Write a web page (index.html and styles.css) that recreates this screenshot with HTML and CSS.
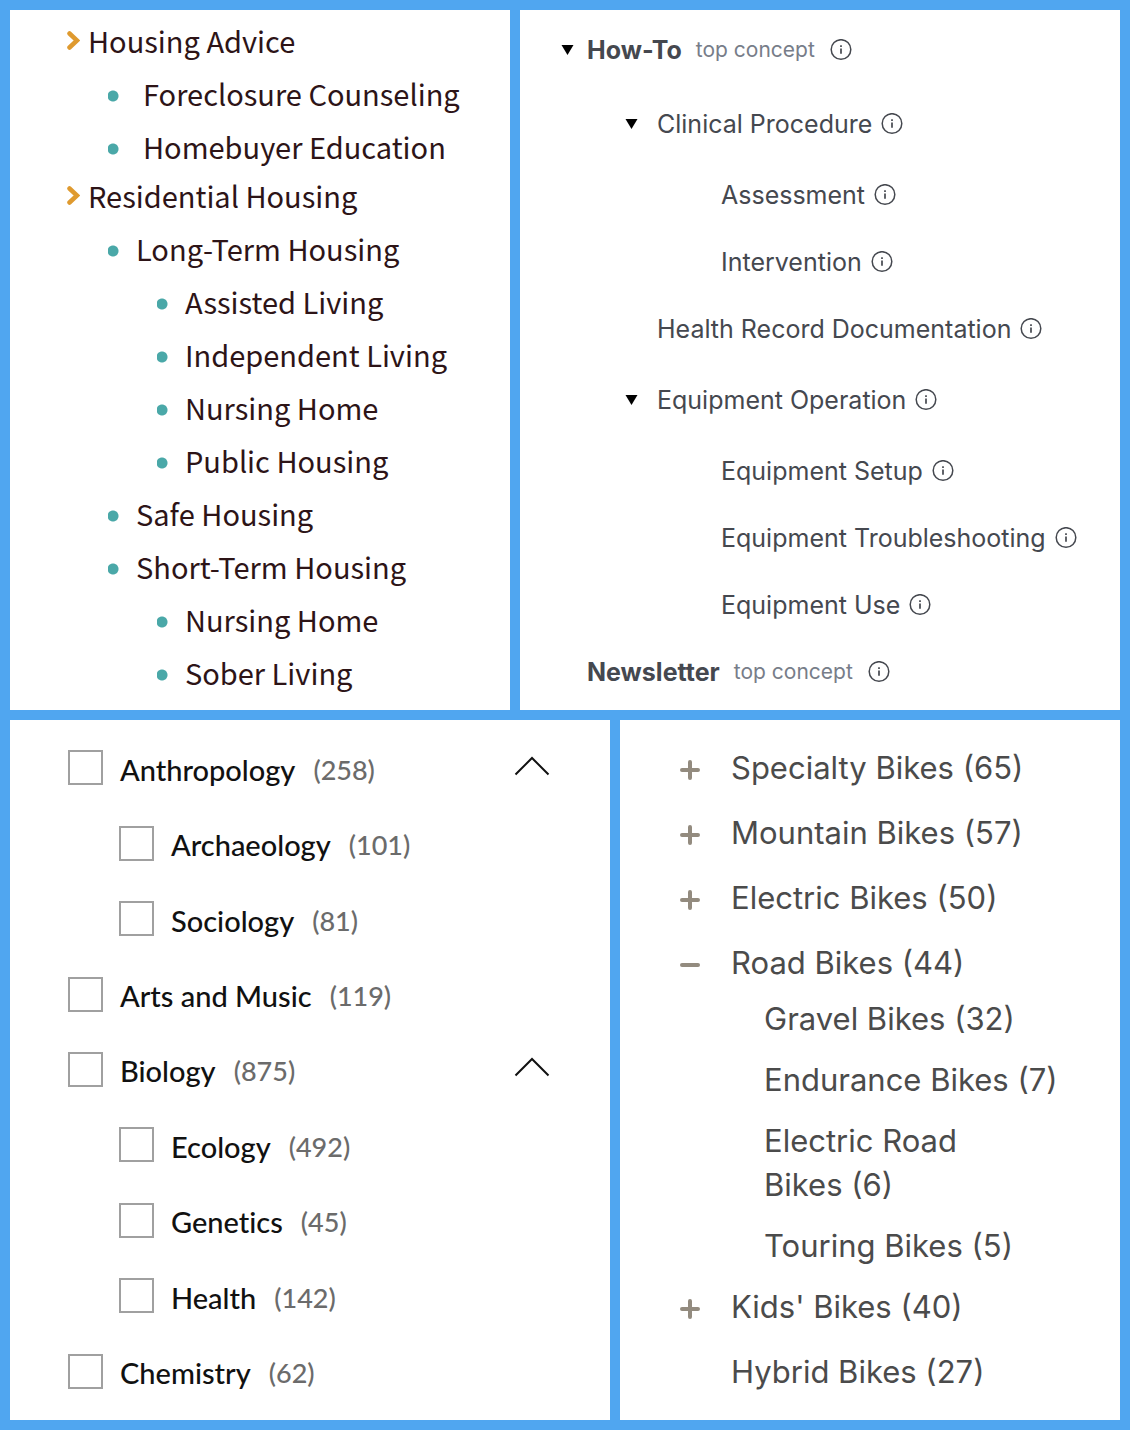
FILE: index.html
```html
<!DOCTYPE html>
<html lang="en">
<head>
<meta charset="utf-8">
<meta name="viewport" content="width=device-width, initial-scale=1">
<title>Hierarchy examples</title>
<link rel="stylesheet" href="styles.css">
</head>
<body>
<svg class="sprite" aria-hidden="true">
  <symbol id="angle" viewBox="0 0 14 20"><path d="M3.500 2.500 11 9.500 3.500 16.500" fill="none" stroke="#df9a2f" stroke-width="4.500" stroke-linecap="round"/></symbol>
  <symbol id="caret" viewBox="0 0 12 10"><path d="M0 0H12L6 10Z" fill="#000"/></symbol>
  <symbol id="info" viewBox="0 0 22 22"><circle cx="11" cy="10.500" r="9.800" fill="none" stroke="#45484f" stroke-width="1.500"/><path d="M11 9.500v5.200M11 6.200v1.800" fill="none" stroke="#45484f" stroke-width="1.700"/></symbol>
  <symbol id="chevron" viewBox="0 0 36 20"><path d="M1.500 18.500 18 2 34.500 18.500" fill="none" stroke="#111" stroke-width="2"/></symbol>
  <symbol id="plus" viewBox="0 0 20 20"><path d="M2 10H18M10 2V18" fill="none" stroke="#938b7f" stroke-width="4" stroke-linecap="round"/></symbol>
  <symbol id="minus" viewBox="0 0 20 20"><path d="M2 10H18" fill="none" stroke="#938b7f" stroke-width="4" stroke-linecap="round"/></symbol>
</svg>

<main class="board">
  <div class="row">
    <section class="panel housing">
      <ul>
        <li>
          <div class="topic"><svg class="angle"><use href="#angle"/></svg>Housing Advice</div>
          <ul class="bullets wide">
            <li>Foreclosure Counseling</li>
            <li>Homebuyer Education</li>
          </ul>
        </li>
        <li>
          <div class="topic"><svg class="angle"><use href="#angle"/></svg>Residential Housing</div>
          <ul class="bullets">
            <li>Long-Term Housing
              <ul class="bullets">
                <li>Assisted Living</li>
                <li>Independent Living</li>
                <li>Nursing Home</li>
                <li>Public Housing</li>
              </ul>
            </li>
            <li>Safe Housing</li>
            <li>Short-Term Housing
              <ul class="bullets">
                <li>Nursing Home</li>
                <li>Sober Living</li>
              </ul>
            </li>
          </ul>
        </li>
      </ul>
    </section>

    <section class="panel concepts">
      <ul>
        <li>
          <div class="concept root open">
            <button class="toggle" aria-label="Collapse How-To"><svg class="caret"><use href="#caret"/></svg></button>
            <strong>How-To</strong><span class="note">top concept</span>
            <button class="info" aria-label="About How-To"><svg><use href="#info"/></svg></button>
          </div>
          <ul class="second">
            <li>
              <div class="concept open">
                <button class="toggle" aria-label="Collapse Clinical Procedure"><svg class="caret"><use href="#caret"/></svg></button>
                <span>Clinical Procedure</span>
                <button class="info" aria-label="About Clinical Procedure"><svg><use href="#info"/></svg></button>
              </div>
              <ul class="third">
                <li class="concept"><span>Assessment</span><button class="info" aria-label="About Assessment"><svg><use href="#info"/></svg></button></li>
                <li class="concept"><span>Intervention</span><button class="info" aria-label="About Intervention"><svg><use href="#info"/></svg></button></li>
              </ul>
            </li>
            <li class="concept"><span>Health Record Documentation</span><button class="info" aria-label="About Health Record Documentation"><svg><use href="#info"/></svg></button></li>
            <li>
              <div class="concept open">
                <button class="toggle" aria-label="Collapse Equipment Operation"><svg class="caret"><use href="#caret"/></svg></button>
                <span>Equipment Operation</span>
                <button class="info" aria-label="About Equipment Operation"><svg><use href="#info"/></svg></button>
              </div>
              <ul class="third">
                <li class="concept"><span>Equipment Setup</span><button class="info" aria-label="About Equipment Setup"><svg><use href="#info"/></svg></button></li>
                <li class="concept"><span>Equipment Troubleshooting</span><button class="info" aria-label="About Equipment Troubleshooting"><svg><use href="#info"/></svg></button></li>
                <li class="concept"><span>Equipment Use</span><button class="info" aria-label="About Equipment Use"><svg><use href="#info"/></svg></button></li>
              </ul>
            </li>
          </ul>
        </li>
        <li class="concept root">
          <strong>Newsletter</strong><span class="note">top concept</span>
          <button class="info" aria-label="About Newsletter"><svg><use href="#info"/></svg></button>
        </li>
      </ul>
    </section>
  </div>

  <div class="row flipped">
    <section class="panel subjects">
      <ul>
        <li><label><input type="checkbox"><span>Anthropology</span><span class="count">(258)</span></label><button class="fold" aria-label="Collapse Anthropology"><svg><use href="#chevron"/></svg></button></li>
        <li class="sub"><label><input type="checkbox"><span>Archaeology</span><span class="count">(101)</span></label></li>
        <li class="sub"><label><input type="checkbox"><span>Sociology</span><span class="count">(81)</span></label></li>
        <li><label><input type="checkbox"><span>Arts and Music</span><span class="count">(119)</span></label></li>
        <li><label><input type="checkbox"><span>Biology</span><span class="count">(875)</span></label><button class="fold" aria-label="Collapse Biology"><svg><use href="#chevron"/></svg></button></li>
        <li class="sub"><label><input type="checkbox"><span>Ecology</span><span class="count">(492)</span></label></li>
        <li class="sub"><label><input type="checkbox"><span>Genetics</span><span class="count">(45)</span></label></li>
        <li class="sub"><label><input type="checkbox"><span>Health</span><span class="count">(142)</span></label></li>
        <li><label><input type="checkbox"><span>Chemistry</span><span class="count">(62)</span></label></li>
      </ul>
    </section>

    <section class="panel bikes">
      <ul>
        <li><div class="kind"><button aria-label="Expand Specialty Bikes"><svg><use href="#plus"/></svg></button><a href="#">Specialty Bikes&nbsp;(65)</a></div></li>
        <li><div class="kind"><button aria-label="Expand Mountain Bikes"><svg><use href="#plus"/></svg></button><a href="#">Mountain Bikes&nbsp;(57)</a></div></li>
        <li><div class="kind"><button aria-label="Expand Electric Bikes"><svg><use href="#plus"/></svg></button><a href="#">Electric Bikes&nbsp;(50)</a></div></li>
        <li class="expanded">
          <div class="kind"><button aria-label="Collapse Road Bikes"><svg><use href="#minus"/></svg></button><a href="#">Road Bikes&nbsp;(44)</a></div>
          <ul>
            <li><a href="#">Gravel Bikes&nbsp;(32)</a></li>
            <li><a href="#">Endurance Bikes&nbsp;(7)</a></li>
            <li><a href="#">Electric Road Bikes&nbsp;(6)</a></li>
            <li><a href="#">Touring Bikes&nbsp;(5)</a></li>
          </ul>
        </li>
        <li><div class="kind"><button aria-label="Expand Kids' Bikes"><svg><use href="#plus"/></svg></button><a href="#">Kids' Bikes&nbsp;(40)</a></div></li>
        <li><div class="kind leaf"><a href="#">Hybrid Bikes&nbsp;(27)</a></div></li>
      </ul>
    </section>
  </div>
</main>
</body>
</html>
```
FILE: styles.css
```css
* { box-sizing: border-box; }

body { margin: 0; background: #50a6f0; }

ul { list-style: none; margin: 0; padding: 0; }

button { margin: 0; padding: 0; border: 0; background: none; cursor: pointer; display: flex; flex: none; }

svg { display: block; flex: none; }

.sprite { position: absolute; width: 0; height: 0; }

.board { display: grid; grid-auto-rows: 1fr; gap: 10px; padding: 10px; min-height: 100vh; }
.row { display: grid; grid-template-columns: minmax(0, 5fr) minmax(0, 6fr); gap: 10px; }
.row.flipped { grid-template-columns: minmax(0, 6fr) minmax(0, 5fr); }
.panel { background: #fff; font-variant-ligatures: none; }

/* Housing */
.housing {
  padding: 8px 10px 8px 56px;
  font: 29px/53px "Noto Sans CJK JP", "Noto Sans", sans-serif;
  color: #2d1417;
}
.topic { display: flex; align-items: center; gap: 8px; line-height: 45px; }
.angle { width: 14px; height: 20px; }
.topic + .bullets { padding-top: 4px; margin-left: 42px; }
.bullets > li {
  padding-left: 28px;
  background: radial-gradient(circle at 5px 29px, #4aa8a8 5px, transparent 6px) no-repeat;
}
.bullets .bullets { margin-left: 21px; }
.bullets.wide > li { padding-left: 35px; }

/* Concepts */
.concepts {
  padding: 3px 10px 3px 67px;
  font: 25px/32px Inter, sans-serif;
  font-variant-ligatures: none;
  color: #45484f;
}
.concept { display: flex; align-items: center; min-height: 67px; }
.concept.open { min-height: 75px; margin-left: -32px; }
.concept.root.open { min-height: 73px; margin-left: -26px; }
.toggle { width: 32px; }
.root .toggle { width: 26px; }
.caret { width: 13px; height: 10px; }
.second { margin-left: 70px; }
.third { margin-left: 64px; }
.note { margin: 0 6px 0 14px; font-size: 21px; color: #777d89; }
.info { margin-left: 9px; }
.info svg { width: 22px; height: 22px; }

/* Subjects */
.subjects {
  display: flex;
  padding: 10px 60px 11px 58px;
  font: 500 29px/36px Lato, sans-serif;
  font-variant-ligatures: none;
  color: #111;
}
.subjects ul { flex: 1; display: grid; grid-auto-rows: minmax(56px, 1fr); }
.subjects li { display: flex; align-items: center; justify-content: space-between; }
.subjects .sub { padding-left: 51px; }
.subjects label { display: flex; align-items: center; }
.subjects input {
  appearance: none;
  width: 35px;
  height: 35px;
  margin: 0 17px 0 0;
  border: 2px solid #a0a0a0;
  background: #fff;
}
.subjects label span { padding-top: 4px; }
.subjects .count { margin-left: 18px; color: #6b6b6b; font-size: 27px; }
.fold { padding-bottom: 4px; }
.fold svg { width: 36px; height: 20px; }

/* Bikes */
.bikes {
  padding: 26px 50px 24px 60px;
  font: 31px/44px Inter, sans-serif;
}
.bikes a { color: #4b4b4b; text-decoration: none; }
.kind { display: flex; align-items: center; gap: 31px; }
.kind button { padding-top: 4px; }
.kind svg { width: 20px; height: 20px; }
.kind.leaf { padding-left: 51px; }
.bikes > ul > li + li { margin-top: 21px; }
.bikes > ul > .expanded + li { margin-top: 17px; }
.expanded ul { display: grid; gap: 17px; padding: 12px 0 0 84px; }
```
